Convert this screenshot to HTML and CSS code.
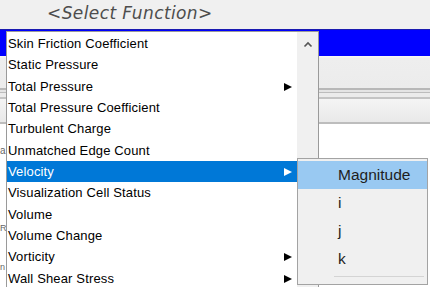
FILE: index.html
```html
<!DOCTYPE html>
<html>
<head>
<meta charset="utf-8">
<link rel="stylesheet" href="styles.css">
</head>
<body>
<div class="screen">
  <div class="header">&lt;Select Function&gt;</div>
  <div class="bluebar"></div>
  <div class="toolbar"></div>
  <div class="sep"><div class="l1"></div><div class="l2"></div><div class="l3"></div><div class="l4"></div></div>
  <div class="tabrow"></div>
  <div class="content">
    <div class="lbl r1">a</div>
    <div class="lbl r2">R</div>
    <div class="lbl r3">n</div>
  </div>

  <div class="menu">
    <div class="list">
      <div class="item">Skin Friction Coefficient</div>
      <div class="item">Static Pressure</div>
      <div class="item sub">Total Pressure<span class="arrow"></span></div>
      <div class="item">Total Pressure Coefficient</div>
      <div class="item">Turbulent Charge</div>
      <div class="item">Unmatched Edge Count</div>
      <div class="item sub active">Velocity<span class="arrow"></span></div>
      <div class="item">Visualization Cell Status</div>
      <div class="item">Volume</div>
      <div class="item">Volume Change</div>
      <div class="item sub">Vorticity<span class="arrow"></span></div>
      <div class="item sub">Wall Shear Stress<span class="arrow"></span></div>
    </div>
    <div class="scroll">
      <svg class="chev" width="10" height="7" viewBox="0 0 10 7"><path d="M1.5 5.5 L5 2 L8.5 5.5" fill="none" stroke="#555" stroke-width="1.6"/></svg>
    </div>
  </div>

  <div class="submenu">
    <div class="sitem hot">Magnitude</div>
    <div class="sitem">i</div>
    <div class="sitem">j</div>
    <div class="sitem">k</div>
    <div class="ssep"></div>
  </div>
</div>
</body>
</html>
```

FILE: styles.css
```css
html, body {
  margin: 0;
  padding: 0;
  background: #ffffff;
}
.screen {
  position: relative;
  width: 430px;
  height: 287px;
  overflow: hidden;
  background: #ffffff;
  font-family: "Liberation Sans", Arial, sans-serif;
}
.header {
  height: 29px;
  box-sizing: border-box;
  background: #f0f0f0;
  padding-left: 47px;
  padding-top: 3px;
  font-family: "DejaVu Sans", sans-serif;
  font-style: italic;
  font-size: 17px;
  letter-spacing: 0.4px;
  color: #4d4d4d;
  line-height: 21px;
}
.bluebar {
  height: 27px;
  box-sizing: border-box;
  background: #0000ff;
  border-top: 1px solid #1a1ab0;
}
.toolbar {
  height: 32px;
  background: linear-gradient(#f6f6f6 0, #f6f6f6 1px, #eeeeee 2px, #ececec 100%);
}
.sep .l1 { height: 2px; background: #b8b8b8; }
.sep .l2 { height: 2px; background: #e4e4e4; }
.sep .l3 { height: 1px; background: #bcbcbc; }
.sep .l4 { height: 4px; background: #ebebeb; }
.tabrow {
  height: 23px;
  border-top: 2px solid #c4c4c4;
  border-bottom: 2px solid #bdbdbd;
  background: linear-gradient(#f4f4f4, #e9e9e9);
}
.content {
  display: flex;
  flex-direction: column;
  font-size: 10px;
  color: #666;
  line-height: 13px;
}
.lbl {
  white-space: nowrap;
}
.r1 { margin-top: 20px; }
.r2 { margin-top: 65px; font-size: 9px; }
.r3 { margin-top: 26px; font-size: 9px; }

.menu {
  position: absolute;
  left: 6px;
  top: 31px;
  width: 313px;
  height: 270px;
  box-sizing: border-box;
  border: 1px solid #9a9a9a;
  background: #ffffff;
  display: flex;
}
.list {
  width: 290px;
  padding-top: 1px;
  background: #ffffff;
}
.item {
  position: relative;
  height: 21.33px;
  line-height: 21px;
  padding-left: 1px;
  font-size: 13px;
  letter-spacing: 0.15px;
  color: #000;
  white-space: nowrap;
}
.item.active {
  background: #0078d7;
  color: #ffffff;
}
.arrow {
  position: absolute;
  left: 277px;
  top: 7px;
  width: 0;
  height: 0;
  border-top: 4px solid transparent;
  border-bottom: 4px solid transparent;
  border-left: 8px solid #000;
}
.active .arrow {
  border-left-color: #ffffff;
}
.scroll {
  width: 21px;
  background: #f0f0f0;
  display: flex;
  justify-content: center;
  align-items: flex-start;
  padding-top: 9px;
  box-sizing: border-box;
}
.chev { display: block; }

.submenu {
  position: absolute;
  left: 297px;
  top: 158px;
  width: 131px;
  height: 127px;
  box-sizing: border-box;
  border: 1px solid #a3a3a3;
  background: #f0f0f0;
  padding-top: 2px;
}
.sitem {
  height: 28px;
  line-height: 28px;
  padding-left: 40px;
  font-size: 15.5px;
  color: #1e1e1e;
}
.sitem.hot {
  background: #99c9f2;
}
.ssep {
  margin: 3px 3px 0 36px;
  height: 1px;
  background: #d4d4d4;
}
```
